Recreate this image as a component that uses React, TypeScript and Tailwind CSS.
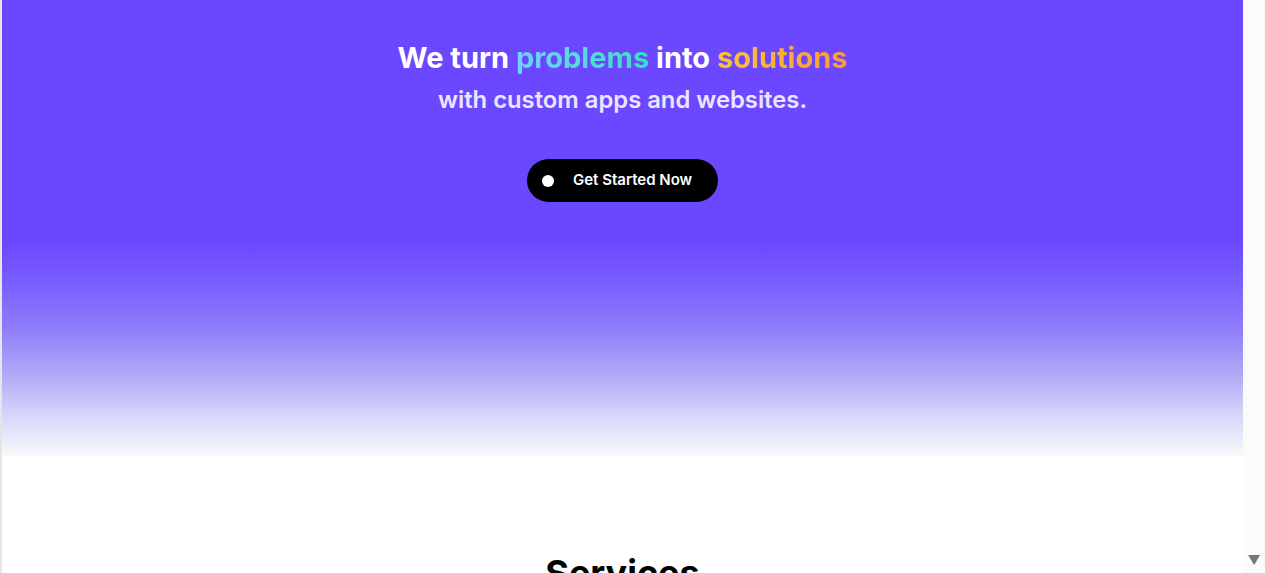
import React from "react";

const Hero = () => {
  return (
    <section className="flex h-[456px] flex-col items-center bg-[linear-gradient(to_bottom,#6b48ff_0%,#6b48ff_53%,#785cff_61%,#8e7cfb_72%,#b3aef6_83%,#dadafa_92%,#f8fafc_100%)] pt-[39px]">
      <h1 className="text-center text-[29px] font-bold leading-[38px] text-white">
        We turn{" "}
        <span className="bg-gradient-to-r from-[#6fd3f5] to-[#34e0c0] bg-clip-text text-transparent">
          problems
        </span>{" "}
        into{" "}
        <span className="bg-gradient-to-r from-[#fbc23a] to-[#fb9a3c] bg-clip-text text-transparent">
          solutions
        </span>
      </h1>
      <p className="mt-[7px] text-center text-[23.8px] font-semibold leading-[32px] text-[#ebe6ff]">
        with custom apps and websites.
      </p>
      <button className="mt-[43px] flex h-[43px] w-[191px] items-center rounded-full bg-black pl-[15px]">
        <span className="size-[12px] rounded-full bg-white" />
        <span className="ml-[19px] text-[15px] font-semibold text-white">
          Get Started Now
        </span>
      </button>
    </section>
  );
};

const Services = () => {
  return (
    <section className="flex flex-col items-center bg-white pt-[95px] pb-20">
      <h2 className="text-[36px] font-bold leading-[44px] text-black">Services</h2>
    </section>
  );
};

export default function App() {
  return (
    <div className="flex h-[573px] overflow-hidden bg-white font-['Inter',sans-serif]">
      <div className="w-[2px] shrink-0 bg-[#e6e6e6]" />
      <main className="min-w-0 flex-1">
        <Hero />
        <Services />
      </main>
      <div className="flex w-[22px] shrink-0 flex-col justify-end bg-[#fbfbfb] pb-[6px]">
        <span className="text-center text-[13px] leading-none text-[#777]">▼</span>
      </div>
    </div>
  );
}
